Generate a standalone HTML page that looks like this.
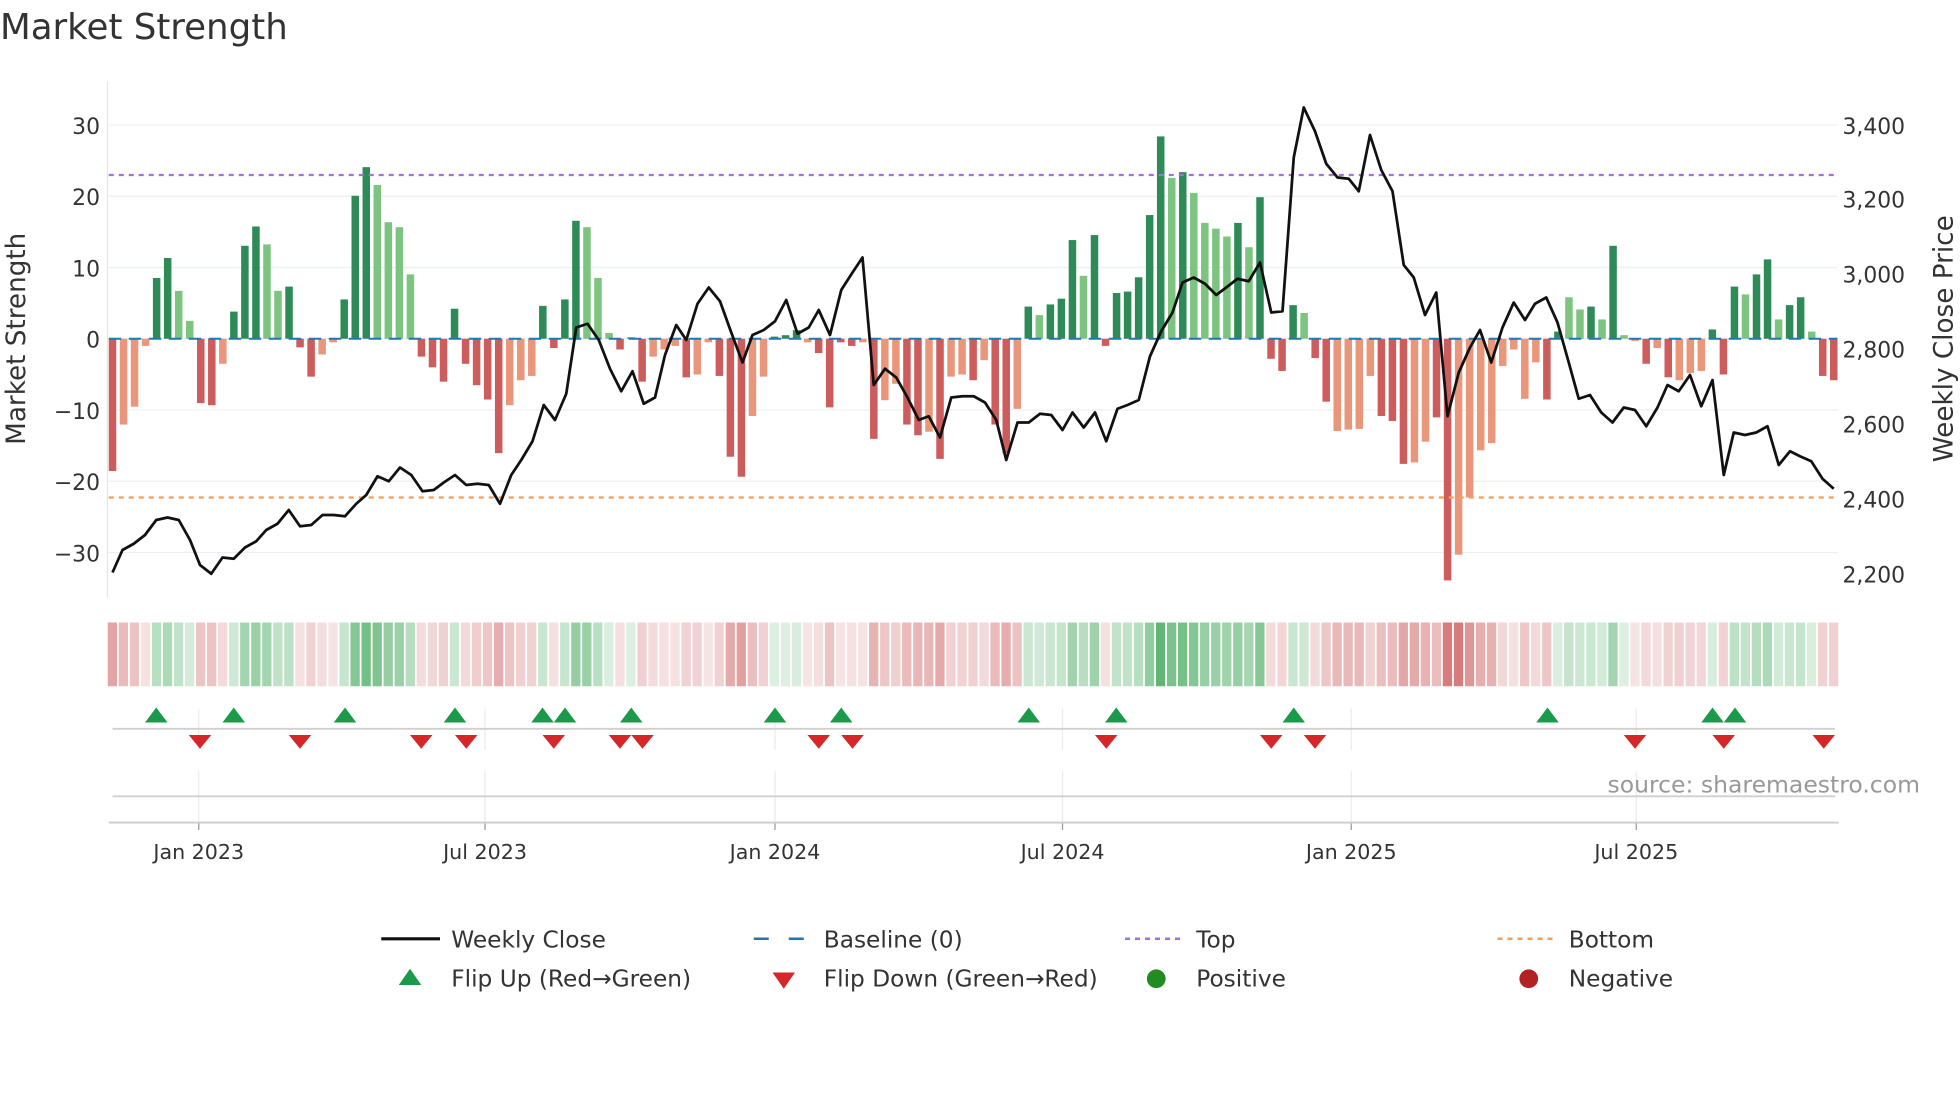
<!DOCTYPE html>
<html><head><meta charset="utf-8"><style>
html,body{margin:0;padding:0;background:#fff;}
svg{display:block;}
text{font-family:"DejaVu Sans","Liberation Sans",sans-serif;fill:#333;}
</style></head><body>
<svg id="s" width="1960" height="1102" viewBox="0 0 1568 881.6" xmlns="http://www.w3.org/2000/svg">
<text x="0" y="31" font-size="28.5" fill="#333">Market Strength</text>
<g id="grid" stroke="#eceff3" stroke-width="1"></g>
<line x1="86" y1="65" x2="86" y2="478" stroke="#e5e5e5"/>
<g id="bars"></g>
<line x1="87" y1="271" x2="1470" y2="271" stroke="#1f77b4" stroke-width="1.6" stroke-dasharray="10,6"/>
<line x1="87" y1="140" x2="1470" y2="140" stroke="#a66ee0" stroke-width="1.8" stroke-dasharray="4,4"/>
<line x1="87" y1="398" x2="1470" y2="398" stroke="#f0a05a" stroke-width="1.8" stroke-dasharray="4,4"/>
<polyline id="price" fill="none" stroke="#111" stroke-width="2.2" stroke-linejoin="round"/>
<g font-size="17.5" text-anchor="end">
<text x="80" y="107">30</text><text x="80" y="164">20</text><text x="80" y="221">10</text><text x="80" y="278">0</text>
<text x="80" y="335">−10</text><text x="80" y="392">−20</text><text x="80" y="449">−30</text>
</g>
<g font-size="17.5">
<text x="1474" y="107">3,400</text><text x="1474" y="166">3,200</text><text x="1474" y="226">3,000</text><text x="1474" y="286">2,800</text>
<text x="1474" y="346">2,600</text><text x="1474" y="406">2,400</text><text x="1474" y="466">2,200</text>
</g>
<text transform="translate(20,271) rotate(-90)" font-size="21" text-anchor="middle">Market Strength</text>
<text transform="translate(1562,271) rotate(-90)" font-size="21" text-anchor="middle">Weekly Close Price</text>
<g id="strip"></g>
<g id="vg" stroke="#e8ebf0" stroke-width="1"></g>
<line x1="90" y1="583" x2="1468" y2="583" stroke="#d0d0d0" stroke-width="1.5"/>
<line x1="90" y1="637" x2="1468" y2="637" stroke="#d0d0d0" stroke-width="1.5"/>
<line x1="87" y1="658" x2="1471" y2="658" stroke="#ccc" stroke-width="1.5"/>
<g id="marks"></g>
<text x="1536" y="634" font-size="18.8" text-anchor="end" style="fill:#999">source: sharemaestro.com</text>
<g font-size="16.5" text-anchor="middle">
<text x="159" y="687">Jan 2023</text><text x="388" y="687">Jul 2023</text><text x="620" y="687">Jan 2024</text>
<text x="850" y="687">Jul 2024</text><text x="1081" y="687">Jan 2025</text><text x="1309" y="687">Jul 2025</text>
</g>
<g font-size="18.6">
<line x1="305" y1="751" x2="352" y2="751" stroke="#111" stroke-width="2.5"/><text x="361" y="758">Weekly Close</text>
<line x1="603" y1="751" x2="648" y2="751" stroke="#1f77b4" stroke-width="2" stroke-dasharray="12,16"/><text x="659" y="758">Baseline (0)</text>
<line x1="900" y1="751" x2="946" y2="751" stroke="#a66ee0" stroke-width="2" stroke-dasharray="4,4"/><text x="957" y="758">Top</text>
<line x1="1198" y1="751" x2="1244" y2="751" stroke="#f0a05a" stroke-width="2" stroke-dasharray="4,4"/><text x="1255" y="758">Bottom</text>
<polygon points="319,788 337,788 328,775" fill="#1a9a4a"/><text x="361" y="789">Flip Up (Red→Green)</text>
<polygon points="618,778 636,778 627,791" fill="#d62728"/><text x="659" y="789">Flip Down (Green→Red)</text>
<circle cx="925" cy="783" r="7.5" fill="#228b22"/><text x="957" y="789">Positive</text>
<circle cx="1223" cy="783" r="7.5" fill="#b22222"/><text x="1255" y="789">Negative</text>
</g>
</svg>
<script>
var NS="http://www.w3.org/2000/svg";
function el(p,t,a){var e=document.createElementNS(NS,t);for(var k in a)e.setAttribute(k,a[k]);document.getElementById(p).appendChild(e);return e;}
[100,157,214,271,328,385,442].forEach(function(y){el("grid","line",{x1:87,x2:1470,y1:y,y2:y});});
[159,388,620,850,1081,1309].forEach(function(x){el("vg","line",{x1:x,x2:x,y1:567,y2:600});el("vg","line",{x1:x,x2:x,y1:617,y2:658});el("vg","line",{x1:x,x2:x,y1:658,y2:664,stroke:"#999"});});
var v=[-18.5,1,-12,0,-9.5,0,-1,0,8.5,1,11.3,1,6.7,0,2.5,0,-9,1,-9.3,1,-3.5,0,3.8,1,13,1,15.7,1,13.2,0,6.7,0,7.3,1,-1.2,1,-5.3,1,-2.2,0,-0.5,0,5.5,1,20,1,24,1,21.5,0,16.3,0,15.6,0,9,0,-2.5,1,-4,1,-6,1,4.2,1,-3.5,1,-6.5,1,-8.5,1,-16,1,-9.3,0,-5.8,0,-5.2,0,4.6,1,-1.3,1,5.5,1,16.5,1,15.6,0,8.5,0,0.8,0,-1.5,1,0.2,1,-6,1,-2.5,0,-1.5,0,-1,0,-5.4,1,-5,0,-0.5,0,-5.2,1,-16.5,1,-19.3,1,-10.8,0,-5.3,0,0.3,1,0.5,1,1.2,1,-0.5,0,-2,1,-9.6,1,-0.5,1,-1,1,-0.5,0,-14,1,-8.6,0,-6.3,0,-12,1,-13.5,1,-13,0,-16.8,1,-5.3,0,-5,0,-5.8,1,-3,0,-12,1,-16,1,-9.8,0,4.5,1,3.3,0,4.8,1,5.6,1,13.8,1,8.8,0,14.5,1,-1,1,6.4,1,6.6,1,8.6,1,17.3,1,28.3,1,22.5,0,23.3,1,20.4,0,16.2,0,15.4,0,14.3,0,16.2,1,12.8,0,19.8,1,-2.8,1,-4.5,1,4.7,1,3.6,0,-2.7,1,-8.8,1,-12.9,0,-12.7,0,-12.6,0,-5.2,0,-10.8,1,-11.5,1,-17.5,1,-17.3,0,-14.4,0,-11,1,-33.8,1,-30.2,0,-22.2,0,-15.6,0,-14.6,0,-3.8,0,-1.5,0,-8.4,0,-3.3,0,-8.5,1,1,1,5.8,0,4.1,0,4.5,1,2.7,0,13,1,0.5,0,-0.3,0,-3.5,1,-1.3,0,-5.4,1,-5.8,0,-4.8,0,-4.5,0,1.3,1,-5,1,7.3,1,6.2,0,9,1,11.1,1,2.7,0,4.7,1,5.8,1,1,0,-5.2,1,-5.8,1];
var n=v.length/2, step=(1467-90)/(n-1);
for(var i=0;i<n;i++){var val=v[2*i],d=v[2*i+1],x=90+i*step,y0=271,y1=271-val*5.72;
 var c=val>=0?(d?"#2e8b57":"#7cc47f"):(d?"#cd5c5c":"#e9967a");
 el("bars","rect",{x:x-3,y:Math.min(y0,y1),width:6,height:Math.abs(y1-y0),fill:c});
 var a=Math.min(1,0.2+Math.abs(val)/30*0.8), col=val>=0?"rgba(60,165,85,"+a*0.85+")":"rgba(200,80,80,"+a*0.75+")";
 el("strip","rect",{x:x-step/2+0.6,y:498,width:step-1.4,height:51,fill:col});
}
var p=[90,458,98,440,107,435,116,428,125,416,134,414,143,416,152,432,160,452,169,459,178,446,187,447,196,438,205,433,213,424,222,419,231,408,240,421,249,420,258,412,267,412,276,413,285,403,293,396,302,381,311,385,320,374,329,380,338,393,347,392,355,386,364,380,373,388,382,387,391,388,400,403,409,380,417,368,426,353,435,324,444,336,453,315,461,262,470,259,479,272,488,295,497,313,506,297,515,323,524,318,532,284,541,260,549,272,558,243,567,230,576,241,585,266,594,290,602,268,611,264,620,257,629,240,638,267,647,262,655,248,664,268,673,232,682,218,690,206,699,308,708,295,717,302,726,318,735,336,743,333,752,350,761,318,770,317,779,317,788,322,797,336,805,368,814,338,823,338,832,331,841,332,850,344,858,330,867,342,876,330,885,353,894,327,902,324,911,320,920,285,929,265,938,250,946,226,955,222,964,227,973,236,981,230,990,223,999,225,1008,210,1017,250,1026,249,1035,126,1043,86,1052,105,1061,131,1070,142,1079,143,1087,153,1096,108,1105,136,1114,153,1123,212,1131,222,1140,252,1149,234,1158,333,1167,298,1176,278,1184,264,1193,290,1202,262,1211,242,1220,256,1228,243,1237,238,1246,258,1255,290,1263,319,1272,316,1281,330,1290,338,1299,326,1308,328,1317,341,1326,326,1334,308,1343,313,1352,300,1361,325,1370,304,1379,380,1387,346,1396,348,1405,346,1414,341,1423,372,1432,361,1440,365,1449,369,1458,383,1467,391];
var s="";for(var j=0;j<p.length;j+=2)s+=p[j]+","+p[j+1]+" ";document.getElementById("price").setAttribute("points",s);
[125,187,276,364,434,452,505,620,673,823,893,1035,1238,1370,1388].forEach(function(x){el("marks","polygon",{points:(x-9)+",578 "+(x+9)+",578 "+x+",566",fill:"#1a9a4a"});});
[160,240,337,373,443,496,514,655,682,885,1017,1052,1308,1379,1459].forEach(function(x){el("marks","polygon",{points:(x-9)+",588 "+(x+9)+",588 "+x+",599",fill:"#d62728"});});
</script>
</body></html>
